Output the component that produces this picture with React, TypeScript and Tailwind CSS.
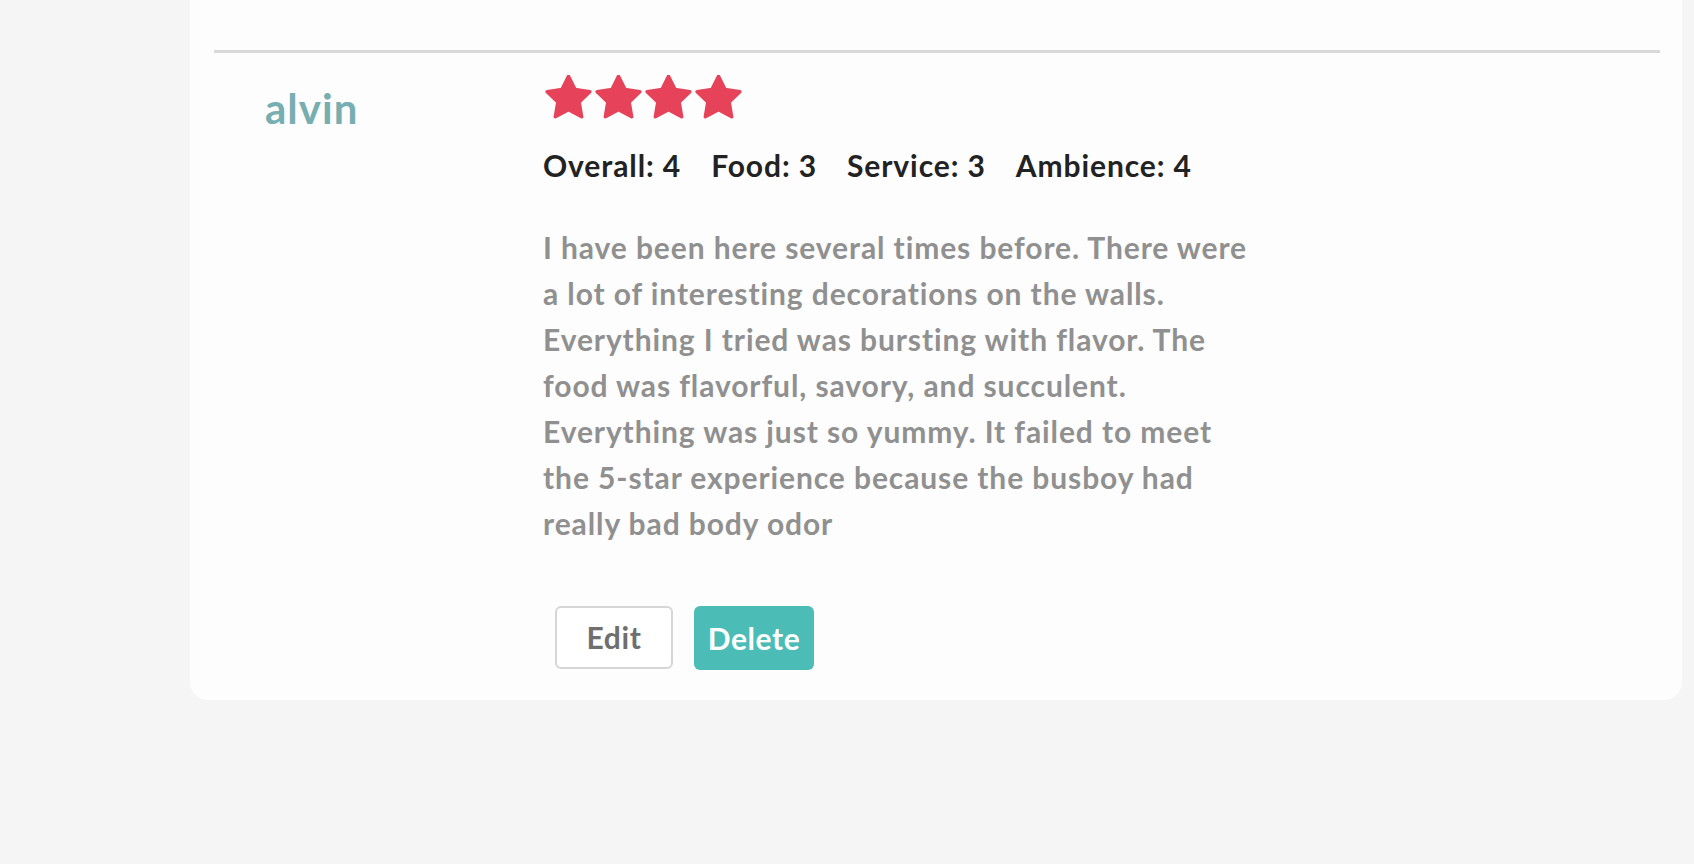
const STAR = 'M12 2l3.09 6.26L22 9.27l-5 4.87 1.18 6.88L12 17.77l-6.18 3.25L7 14.14 2 9.27l6.91-1.01L12 2z';

function Star() {
  return (
    <svg width="47" height="45" viewBox="1 1.5 22 21" className="shrink-0">
      <path d={STAR} fill="#e6435a" stroke="#e6435a" strokeWidth="1.6" strokeLinejoin="round" />
    </svg>
  );
}

const lines = [
  'I have been here several times before. There were',
  'a lot of interesting decorations on the walls.',
  'Everything I tried was bursting with flavor. The',
  'food was flavorful, savory, and succulent.',
  'Everything was just so yummy. It failed to meet',
  'the 5-star experience because the busboy had',
  'really bad body odor',
];

const scores = [
  ['Overall', 4],
  ['Food', 3],
  ['Service', 3],
  ['Ambience', 4],
];

export default function App() {
  return (
    <div className="min-h-screen bg-[#f5f5f5] font-['Lato','Liberation_Sans',sans-serif]">
      <div className="ml-[190px] w-[1492px] bg-[#fdfdfd] rounded-b-[18px] pt-[50px] pb-[30px]">
        <div className="ml-[24px] mr-[22px] border-t-[3px] border-[#d9d9d9]" />
        <div className="flex pl-[75px]">
          <div className="w-[278px] pt-[34px]">
            <span className="text-[42px] leading-none font-bold tracking-[0.025em] text-[#76aeb1]">alvin</span>
          </div>
          <div className="flex flex-col pt-[22px]">
            <div className="flex gap-[3px] ml-[2px]">
              <Star />
              <Star />
              <Star />
              <Star />
            </div>
            <div className="flex gap-[30px] mt-[30px] text-[30px] leading-none font-bold tracking-[0.03em] text-[#222]">
              {scores.map(([k, v]) => (
                <span key={k}>{k}: {v}</span>
              ))}
            </div>
            <p className="mt-[44px] text-[30px] leading-[46px] font-bold tracking-[0.03em] text-[#909090] whitespace-nowrap">
              {lines.map((l, i) => (
                <span key={i} className="block">{l}</span>
              ))}
            </p>
            <div className="flex gap-[21px] ml-[12px] mt-[60px]">
              <button className="w-[118px] h-[63px] border-2 border-[#d6d6d6] rounded-[6px] bg-white text-[30px] font-bold tracking-[0.02em] text-[#6f6f6f]">
                Edit
              </button>
              <button className="w-[120px] h-[64px] rounded-[6px] bg-[#4bbdb6] text-[30px] font-bold tracking-[0.02em] text-white">
                Delete
              </button>
            </div>
          </div>
        </div>
      </div>
    </div>
  );
}
